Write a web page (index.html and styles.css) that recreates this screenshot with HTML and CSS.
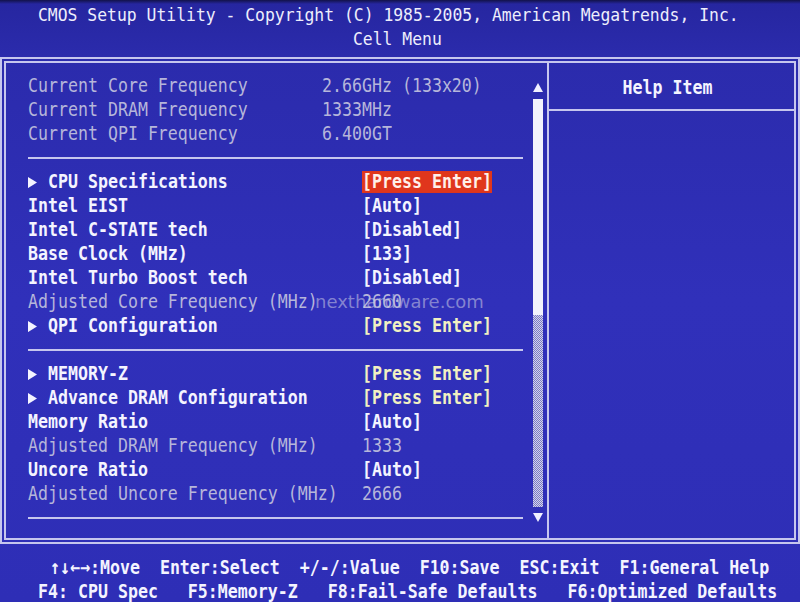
FILE: index.html
```html
<!DOCTYPE html>
<html>
<head>
<meta charset="utf-8">
<link rel="stylesheet" href="styles.css">
</head>
<body>
<div class="screen">
  <div class="header">
    <div class="hline t1"><span class="hs">CMOS Setup Utility - Copyright (C) 1985-2005, American Megatrends, Inc.</span></div>
    <div class="hline t2"><span class="hs">Cell Menu</span></div>
  </div>
  <div class="box">
    <div class="inner">
      <div class="left">
        <div class="list">
          <div class="row info dim"><span class="lbl">Current Core Frequency</span><span class="val">2.66GHz (133x20)</span></div>
          <div class="row info dim"><span class="lbl">Current DRAM Frequency</span><span class="val">1333MHz</span></div>
          <div class="row info dim"><span class="lbl">Current QPI Frequency</span><span class="val">6.400GT</span></div>
          <div class="sep"></div>
          <div class="row sub"><span class="lbl"><span class="arrow"><svg width="9" height="11" viewBox="0 0 9 11"><polygon points="0,0 9,5.5 0,11" fill="#f4f4ff"/></svg></span>CPU Specifications</span><span class="val hi">[Press Enter]</span></div>
          <div class="row"><span class="lbl">Intel EIST</span><span class="val">[Auto]</span></div>
          <div class="row"><span class="lbl">Intel C-STATE tech</span><span class="val">[Disabled]</span></div>
          <div class="row"><span class="lbl">Base Clock (MHz)</span><span class="val">[133]</span></div>
          <div class="row"><span class="lbl">Intel Turbo Boost tech</span><span class="val">[Disabled]</span></div>
          <div class="row dim"><span class="lbl">Adjusted Core Frequency (MHz)</span><span class="val num">2660</span></div>
          <div class="row sub"><span class="lbl"><span class="arrow"><svg width="9" height="11" viewBox="0 0 9 11"><polygon points="0,0 9,5.5 0,11" fill="#f4f4ff"/></svg></span>QPI Configuration</span><span class="val yel">[Press Enter]</span></div>
          <div class="sep"></div>
          <div class="row sub"><span class="lbl"><span class="arrow"><svg width="9" height="11" viewBox="0 0 9 11"><polygon points="0,0 9,5.5 0,11" fill="#f4f4ff"/></svg></span>MEMORY-Z</span><span class="val yel">[Press Enter]</span></div>
          <div class="row sub"><span class="lbl"><span class="arrow"><svg width="9" height="11" viewBox="0 0 9 11"><polygon points="0,0 9,5.5 0,11" fill="#f4f4ff"/></svg></span>Advance DRAM Configuration</span><span class="val yel">[Press Enter]</span></div>
          <div class="row"><span class="lbl">Memory Ratio</span><span class="val">[Auto]</span></div>
          <div class="row dim"><span class="lbl">Adjusted DRAM Frequency (MHz)</span><span class="val num">1333</span></div>
          <div class="row"><span class="lbl">Uncore Ratio</span><span class="val">[Auto]</span></div>
          <div class="row dim"><span class="lbl">Adjusted Uncore Frequency (MHz)</span><span class="val num">2666</span></div>
          <div class="sep"></div>
        </div>
        <div class="scroll">
          <svg class="sarrow" width="10" height="9" viewBox="0 0 10 9"><polygon points="5,0 10,9 0,9" fill="#f0f0ff"/></svg>
          <div class="thumb"></div>
          <div class="track"></div>
          <svg class="sarrow down" width="10" height="9" viewBox="0 0 10 9"><polygon points="0,0 10,0 5,9" fill="#f0f0ff"/></svg>
        </div>
      </div>
      <div class="right">
        <div class="help-head"><span class="hs2">Help Item</span></div>
      </div>
    </div>
  </div>
  <div class="footer">
    <div class="fline f1"><span class="fs">↑↓←→:Move  Enter:Select  +/-/:Value  F10:Save  ESC:Exit  F1:General Help</span></div>
    <div class="fline f2"><span class="fs">F4: CPU Spec   F5:Memory-Z   F8:Fail-Safe Defaults   F6:Optimized Defaults</span></div>
  </div>
  <div class="watermark">nexthardware.com</div>
</div>
</body>
</html>
```

FILE: styles.css
```css
html, body {
  margin: 0;
  padding: 0;
  background: #2e2eb6;
  overflow: hidden;
}

.screen {
  position: relative;
  width: 800px;
  height: 602px;
  overflow: hidden;
  display: flex;
  flex-direction: column;
  font-family: "DejaVu Sans Mono", "Liberation Mono", monospace;
  font-size: 16.6px;
  color: #f4f4ff;
  background: linear-gradient(to bottom, #12124a 0px, #2626a0 4px, #2b2bac 56px, #3030ba 300px, #2e2eb6 602px);
}

/* header */
.header {
  height: 57px;
  flex-shrink: 0;
  box-sizing: border-box;
  padding-top: 3px;
  display: flex;
  flex-direction: column;
}

.hline {
  height: 24px;
  line-height: 24px;
  white-space: pre;
  font-size: 16.4px;
  color: #eeeefc;
}

.hline .hs {
  display: inline-block;
  transform: scaleY(1.12);
}

.t1 { padding-left: 38px; }
.t2 { padding-left: 353px; }

/* main box */
.box {
  height: 487px;
  flex-shrink: 0;
  box-sizing: border-box;
  border: 2px solid #c6c6ee;
  padding: 2px;
}

.inner {
  height: 100%;
  box-sizing: border-box;
  border: 2px solid #c6c6ee;
  display: flex;
}

.left {
  width: 541px;
  display: flex;
  flex-shrink: 0;
}

.list {
  width: 495px;
  padding-left: 22px;
  padding-top: 11px;
  display: flex;
  flex-direction: column;
}

.row {
  height: 24px;
  line-height: 24px;
  display: flex;
  align-items: center;
  white-space: pre;
  font-weight: bold;
  color: #f4f4ff;
  transform: scaleY(1.22);
}

.row .lbl {
  width: 334px;
  flex-shrink: 0;
  display: flex;
  align-items: center;
}

.row.info .lbl {
  width: 294px;
}

.row.dim {
  font-weight: normal;
  color: #b6b6da;
}

.row .val.num {
  color: #b6b6da;
}

.arrow {
  display: inline-flex;
  width: 20px;
  height: 24px;
  align-items: center;
}

.arrow svg {
  transform: scaleY(0.82);
}

.val.hi {
  display: inline-block;
  line-height: 18px;
  height: 18px;
  background: #e0361c;
  color: #fff0ea;
}

.val.yel {
  color: #f2f0c2;
}

.sep {
  height: 24px;
  box-sizing: border-box;
  padding-top: 11px;
}

.sep::before {
  content: "";
  display: block;
  height: 2px;
  background: #c6c6ee;
}

/* scrollbar */
.scroll {
  width: 10px;
  margin-left: 10px;
  padding-top: 20px;
  display: flex;
  flex-direction: column;
}

.sarrow {
  display: block;
}

.thumb {
  margin-top: 7px;
  height: 216px;
  background: #f2f2fc;
}

.track {
  height: 192px;
  background: repeating-conic-gradient(#d4d4ec 0 25%, #7a7ac4 0 50%) 0 0 / 2px 2px;
}

.sarrow.down {
  margin-top: 6px;
}

/* right panel */
.right {
  flex: 1;
  border-left: 2px solid #c6c6ee;
}

.help-head {
  height: 48px;
  border-bottom: 2px solid #c6c6ee;
  display: flex;
  align-items: center;
  justify-content: center;
  padding-right: 8px;
  padding-top: 2px;
  box-sizing: border-box;
  font-weight: bold;
  color: #f4f4ff;
}

.hs2 {
  display: inline-block;
  transform: scaleY(1.22);
}

/* footer */
.footer {
  flex-shrink: 0;
  padding-top: 12px;
  display: flex;
  flex-direction: column;
}

.fline {
  height: 24px;
  line-height: 24px;
  white-space: pre;
  font-weight: bold;
  color: #f4f4ff;
  flex-shrink: 0;
}

.fline .fs {
  display: inline-block;
  transform: scaleY(1.22);
}

.f1 { padding-left: 50px; }
.f2 { padding-left: 38px; }

.watermark {
  position: absolute;
  left: 315px;
  top: 293px;
  font-family: "DejaVu Sans", sans-serif;
  font-size: 18px;
  line-height: 18px;
  color: rgba(205, 205, 228, 0.55);
  white-space: nowrap;
}
```
